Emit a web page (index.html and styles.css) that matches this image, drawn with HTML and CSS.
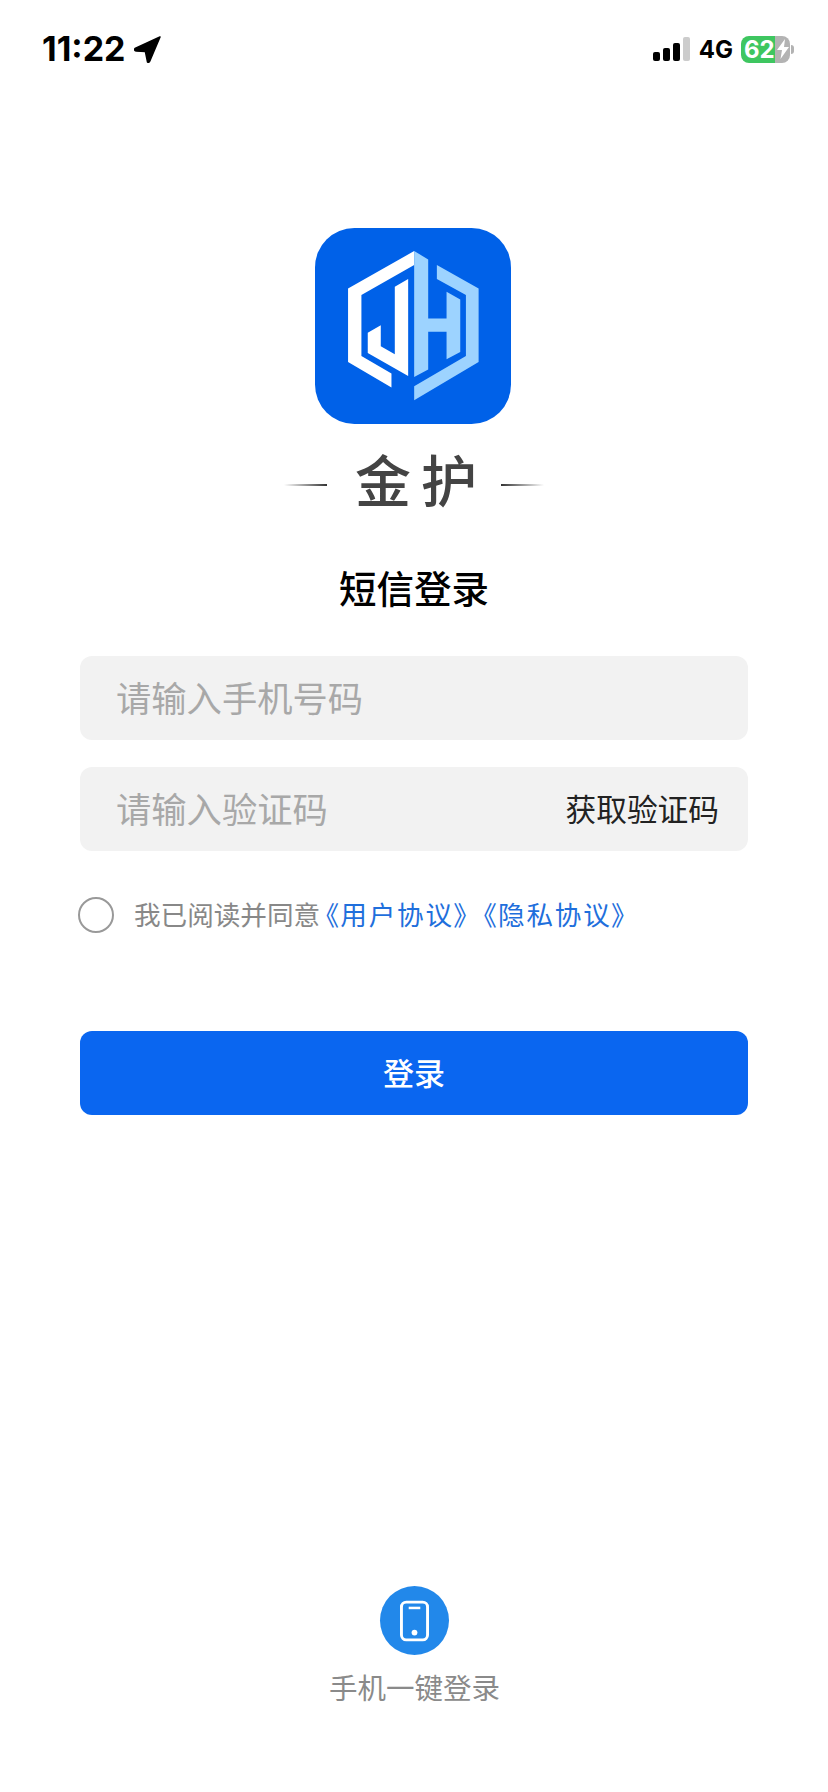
FILE: index.html
```html
<!DOCTYPE html>
<html lang="zh-CN">
<head>
    <meta charset="UTF-8">
    <meta name="viewport" content="width=device-width, initial-scale=1.0">
    <title>短信登录</title>
    <link rel="stylesheet" href="styles.css">
</head>
<body>
    <div class="page">
        <!-- Status bar -->
        <div class="status-bar">
            <div class="status-left">
                <span class="time">11:22</span>
                <svg class="location-icon" viewBox="0 0 26 26"><path d="M25 1 L1 12 Q0 14 2 14.5 L11 15 L13 25 Q14 26 15 24.5 Z" fill="#000" stroke="#000" stroke-width="1.5" stroke-linejoin="round"/></svg>
            </div>
            <div class="status-right">
                <div class="signal">
                    <span class="bar bar-1"></span>
                    <span class="bar bar-2"></span>
                    <span class="bar bar-3"></span>
                    <span class="bar bar-4"></span>
                </div>
                <span class="network">4G</span>
                <div class="battery">
                    <span class="battery-level">62</span>
                    <span class="battery-rest">
                        <svg class="bolt-icon" viewBox="0 0 12 20"><path d="M8 0 L0 11 H5 L3.5 20 L12 8 H7 Z" fill="#fff"/></svg>
                    </span>
                </div>
                <span class="battery-cap"></span>
            </div>
        </div>

        <!-- Logo -->
        <svg class="logo" viewBox="133 54 587 587">
            <rect x="133" y="54" width="587" height="587" rx="118" fill="#0061e8"/>
            <path d="M430 123 L232 235 V455 L362 532 V490 L272 437 V255 L430 165 Z" fill="#fff"/>
            <path d="M412 207 L372 230 V432 L330 408 V345 L291 368 V428 L412 497 Z" fill="#fff"/>
            <path d="M430 123 L472 148 V325 H527 V245 L568 268 V425 L527 447 V365 H472 V478 L430 500 Z" fill="#9dd3ff"/>
            <path d="M498 165 L623 235 V455 L430 570 V528 L585 437 V255 L498 207 Z" fill="#9dd3ff"/>
        </svg>
        <div class="brand">
            <span class="brand-line brand-line-left"></span>
            <span class="brand-name">金护</span>
            <span class="brand-line brand-line-right"></span>
        </div>

        <h1 class="title">短信登录</h1>

        <!-- Form -->
        <div class="form">
            <div class="field">
                <span class="placeholder">请输入手机号码</span>
            </div>
            <div class="field">
                <span class="placeholder">请输入验证码</span>
                <span class="get-code">获取验证码</span>
            </div>
            <div class="agreement">
                <span class="radio"></span>
                <span class="agreement-text">我已阅读并同意</span>
                <span class="agreement-link">《用户协议》</span>
                <span class="agreement-link">《隐私协议》</span>
            </div>
            <button class="login-button">登录</button>
        </div>

        <!-- One tap login -->
        <div class="quick-login">
            <div class="quick-icon">
                <svg class="phone-icon" viewBox="0 0 30 42">
                    <rect x="1.5" y="1.5" width="27" height="39" rx="5" fill="none" stroke="#fff" stroke-width="3"/>
                    <path d="M9 7.5 H21" stroke="#fff" stroke-width="2.6"/>
                    <circle cx="15" cy="33" r="3" fill="#fff"/>
                </svg>
            </div>
            <div class="quick-label">手机一键登录</div>
        </div>
    </div>
</body>
</html>
```

FILE: styles.css
```css
body {
    margin: 0;
    background: #fff;
    font-family: "Noto Sans CJK SC", "Noto Sans", sans-serif;
}
.page {
    display: flex;
    flex-direction: column;
    align-items: center;
    height: 1792px;
    box-sizing: border-box;
    padding-bottom: 85px;
    overflow: hidden;
}

/* Status bar */
.status-bar {
    display: flex;
    justify-content: space-between;
    align-items: center;
    align-self: stretch;
    height: 98px;
    padding: 0 34px 0 42px;
}
.status-left {
    display: flex;
    align-items: center;
    gap: 8px;
}
.time {
    font-family: Inter, sans-serif;
    font-size: 34px;
    font-weight: 700;
    line-height: 36px;
    color: #000;
}
.location-icon {
    width: 27px;
    height: 27px;
}
.status-right {
    display: flex;
    align-items: center;
}
.signal {
    display: flex;
    align-items: flex-end;
    gap: 3px;
    height: 24px;
}
.bar {
    width: 7px;
    border-radius: 2px;
    background: #000;
}
.bar-1 { height: 9px; }
.bar-2 { height: 13px; }
.bar-3 { height: 18px; }
.bar-4 { height: 24px; background: #ccc; }
.network {
    margin-left: 9px;
    font-family: Inter, sans-serif;
    font-size: 24px;
    font-weight: 700;
    color: #000;
}
.battery {
    display: flex;
    margin-left: 8px;
    height: 27px;
    border-radius: 8px;
    overflow: hidden;
}
.battery-level {
    width: 31px;
    padding-left: 3px;
    background: #3ec660;
    font-family: Inter, sans-serif;
    font-size: 24px;
    font-weight: 700;
    line-height: 27px;
    color: #fff;
}
.battery-rest {
    display: flex;
    align-items: center;
    justify-content: center;
    width: 15px;
    background: #b3b3b3;
}
.bolt-icon {
    width: 12px;
    height: 20px;
}
.battery-cap {
    width: 3px;
    height: 9px;
    margin-left: 1px;
    border-radius: 0 3px 3px 0;
    background: #b3b3b3;
}

/* Logo */
.logo {
    width: 196px;
    height: 196px;
    margin: 130px 2px 0 0;
}
.brand {
    display: flex;
    align-items: center;
    gap: 28px;
    height: 60px;
    margin-top: 28px;
}
.brand-line {
    width: 43px;
    height: 2px;
    margin-top: 6px;
}
.brand-line-left {
    background: linear-gradient(to right, rgba(60, 60, 60, 0), #333);
}
.brand-line-right {
    background: linear-gradient(to right, #333, rgba(60, 60, 60, 0));
}
.brand-name {
    margin: 0 -14px 9px 0;
    font-size: 56px;
    font-weight: 500;
    line-height: 60px;
    letter-spacing: 10px;
    color: #444;
}
.title {
    margin: 50px 0 0;
    font-size: 37.5px;
    font-weight: 500;
    line-height: 50px;
    color: #000;
}

/* Form */
.form {
    display: flex;
    flex-direction: column;
    width: 668px;
    margin-top: 44px;
}
.field {
    display: flex;
    justify-content: space-between;
    align-items: center;
    height: 84px;
    box-sizing: border-box;
    margin-bottom: 27px;
    padding: 0 29px 4px 36px;
    border-radius: 12px;
    background: #f2f2f2;
}
.placeholder {
    font-size: 35.3px;
    color: #a8a8a8;
}
.get-code {
    font-size: 30.7px;
    color: #222;
}
.agreement {
    display: flex;
    align-items: center;
    height: 36px;
    margin: 19px 0 0 -2px;
}
.radio {
    width: 36px;
    height: 36px;
    box-sizing: border-box;
    border: 2px solid #999;
    border-radius: 50%;
}
.agreement-text {
    margin: 0 5px 3px 20px;
    font-size: 26.6px;
    color: #888;
}
.agreement-link {
    margin-right: 14px;
    margin-bottom: 3px;
    font-size: 26.6px;
    letter-spacing: 1.8px;
    color: #1f6fdc;
    font-feature-settings: "palt";
}
.login-button {
    height: 84px;
    margin-top: 98px;
    padding: 0 0 3px;
    border: none;
    border-radius: 12px;
    background: #0a66f0;
    font-family: inherit;
    font-size: 31px;
    font-weight: 500;
    color: #fff;
}

/* One tap login */
.quick-login {
    display: flex;
    flex-direction: column;
    align-items: center;
    margin: auto 0 0 1px;
}
.quick-icon {
    display: flex;
    align-items: center;
    justify-content: center;
    width: 69px;
    height: 69px;
    border-radius: 50%;
    background: #2288ea;
}
.phone-icon {
    width: 29px;
    height: 42px;
}
.quick-label {
    margin-top: 12px;
    font-size: 28.5px;
    line-height: 40px;
    color: #8a8a8a;
}
```
